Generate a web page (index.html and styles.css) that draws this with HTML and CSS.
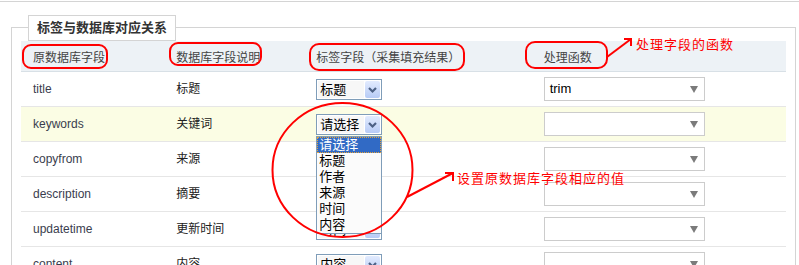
FILE: index.html
```html
<!DOCTYPE html>
<html lang="zh-CN">

<head>
    <meta charset="UTF-8">
    <title>标签与数据库对应关系</title>
    <link rel="stylesheet" href="styles.css">
</head>

<body>
    <div class="page">
        <div class="panel">
            <div class="legend">标签与数据库对应关系</div>
            <table class="map">
                <colgroup>
                    <col class="c1"><col class="c2"><col class="c3"><col class="c4">
                </colgroup>
                <thead>
                    <tr>
                        <th>原数据库字段</th>
                        <th>数据库字段说明</th>
                        <th>标签字段（采集填充结果）</th>
                        <th>处理函数</th>
                    </tr>
                </thead>
                <tbody>
                    <tr>
                        <td class="en">title</td>
                        <td>标题</td>
                        <td>
                            <div class="xp-select"><span class="val">标题</span><span class="btn"><svg width="15" height="17" viewBox="0 0 15 17"><path d="M4 7 L7.5 10.5 L11 7" fill="none" stroke="#4d6185" stroke-width="2.2"/></svg></span></div>
                        </td>
                        <td>
                            <div class="fn-select"><span class="val">trim</span><i class="tri"></i></div>
                        </td>
                    </tr>
                    <tr class="hover">
                        <td class="en">keywords</td>
                        <td>关键词</td>
                        <td>
                            <div class="xp-select"><span class="val">请选择</span><span class="btn"><svg width="15" height="17" viewBox="0 0 15 17"><path d="M4 7 L7.5 10.5 L11 7" fill="none" stroke="#4d6185" stroke-width="2.2"/></svg></span>
                                <ul class="droplist">
                                    <li class="on">请选择</li>
                                    <li>标题</li>
                                    <li>作者</li>
                                    <li>来源</li>
                                    <li>时间</li>
                                    <li>内容</li>
                                </ul>
                            </div>
                        </td>
                        <td>
                            <div class="fn-select"><span class="val"></span><i class="tri"></i></div>
                        </td>
                    </tr>
                    <tr>
                        <td class="en">copyfrom</td>
                        <td>来源</td>
                        <td>
                            <div class="xp-select"><span class="val"></span><span class="btn"><svg width="15" height="17" viewBox="0 0 15 17"><path d="M4 7 L7.5 10.5 L11 7" fill="none" stroke="#4d6185" stroke-width="2.2"/></svg></span></div>
                        </td>
                        <td>
                            <div class="fn-select"><span class="val"></span><i class="tri"></i></div>
                        </td>
                    </tr>
                    <tr>
                        <td class="en">description</td>
                        <td>摘要</td>
                        <td>
                            <div class="xp-select"><span class="val"></span><span class="btn"><svg width="15" height="17" viewBox="0 0 15 17"><path d="M4 7 L7.5 10.5 L11 7" fill="none" stroke="#4d6185" stroke-width="2.2"/></svg></span></div>
                        </td>
                        <td>
                            <div class="fn-select"><span class="val"></span><i class="tri"></i></div>
                        </td>
                    </tr>
                    <tr>
                        <td class="en">updatetime</td>
                        <td>更新时间</td>
                        <td>
                            <div class="xp-select"><span class="val">时间</span><span class="btn"><svg width="15" height="17" viewBox="0 0 15 17"><path d="M4 7 L7.5 10.5 L11 7" fill="none" stroke="#4d6185" stroke-width="2.2"/></svg></span></div>
                        </td>
                        <td>
                            <div class="fn-select"><span class="val"></span><i class="tri"></i></div>
                        </td>
                    </tr>
                    <tr>
                        <td class="en">content</td>
                        <td>内容</td>
                        <td>
                            <div class="xp-select"><span class="val">内容</span><span class="btn"><svg width="15" height="17" viewBox="0 0 15 17"><path d="M4 7 L7.5 10.5 L11 7" fill="none" stroke="#4d6185" stroke-width="2.2"/></svg></span></div>
                        </td>
                        <td>
                            <div class="fn-select"><span class="val"></span><i class="tri"></i></div>
                        </td>
                    </tr>
                </tbody>
            </table>
        </div>

        <!-- red hand-drawn notes over the screenshot -->
        <svg class="marks" width="799" height="265" viewBox="0 0 799 265">
            <g fill="none" stroke="#f00" stroke-width="2">
                <rect x="23" y="45" width="84" height="23" rx="8"/>
                <rect x="170" y="43" width="91" height="22" rx="8"/>
                <rect x="310" y="44" width="154" height="26" rx="9"/>
                <rect x="526" y="42" width="81" height="26" rx="9"/>
                <ellipse cx="342.5" cy="170" rx="70" ry="67"/>
                <path d="M607 57 L631 39"/>
                <path d="M624 39 L631 39 L631 46"/>
                <path d="M407 197 L453 173"/>
                <path d="M445 173 L453 173 L453 181"/>
            </g>
        </svg>
        <span class="note note-fn">处理字段的函数</span>
        <span class="note note-val">设置原数据库字段相应的值</span>
    </div>
</body>

</html>
```

FILE: styles.css
```css
* {
    margin: 0;
    padding: 0;
}

ul,ol,li {
    list-style: none;
}

body {
    font-family: "Liberation Sans", "Noto Sans CJK SC", sans-serif;
    font-size: 12px;
    color: #333;
    background: #fff;
}

.page {
    position: relative;
    width: 799px;
    height: 265px;
    overflow: hidden;
    margin-top: 1px;
    border-top: 1px solid #d4d4d4;
}

.panel {
    margin: 25px 3px 0 11px;
    border: 1px solid #d4d4d4;
    border-bottom: none;
    padding: 0 9px;
    height: 400px;
}

.legend {
    width: fit-content;
    height: 24px;
    margin: -13px 0 0 7px;
    padding: 0 8px;
    border: 1px solid #d4d4d4;
    background: #fff;
    font-size: 13px;
    font-weight: bold;
    line-height: 24px;
    color: #333;
}

.map {
    width: 100%;
    table-layout: fixed;
    border-collapse: separate;
    border-spacing: 0;
}

.map .c1 { width: 143px; }
.map .c2 { width: 140px; }
.map .c3 { width: 227px; }
.map .c4 { width: 254px; }

.map th {
    height: 30px;
    padding-left: 12px;
    text-align: left;
    font-weight: normal;
    color: #444;
    background: #edf2f6;
    border-bottom: 1px solid #d8e0e6;
}

.map td {
    height: 34px;
    padding-left: 12px;
    line-height: 16px;
    vertical-align: middle;
    border-bottom: 1px solid #e6e6e6;
    color: #222;
}

.map td.en {
    color: #3a3d4e;
}

.map tr.hover td {
    background: #fbfde4;
}

/* old xp style select */
.xp-select {
    position: relative;
    display: flex;
    width: 66px;
    height: 21px;
    box-sizing: border-box;
    border: 1px solid #7f9db9;
    background: #fff;
}

.xp-select .val {
    flex: 1;
    margin: 1px 0 1px 1px;
    padding-left: 2px;
    background: #f7f7f7;
    font-size: 13px;
    line-height: 17px;
    color: #000;
    white-space: nowrap;
    overflow: hidden;
}

.xp-select .btn {
    width: 15px;
    height: 17px;
    margin: 1px;
    border-radius: 2px;
    background: linear-gradient(#e2ebfe, #b7cbf6);
}

.xp-select .btn svg {
    display: block;
}

.droplist {
    position: absolute;
    left: -1px;
    top: 21px;
    width: 64px;
    border: 1px solid #7f9db9;
    background: #fbfbfb;
    z-index: 2;
}

.droplist li {
    height: 16px;
    padding-left: 2px;
    font-size: 13px;
    line-height: 16px;
    color: #000;
}

.droplist li.on {
    background: #316ac5;
    color: #fff;
    outline: 1px dotted #e3a23b;
    outline-offset: -1px;
}

.fn-select {
    display: flex;
    justify-content: space-between;
    align-items: center;
    width: 161px;
    height: 24px;
    box-sizing: border-box;
    padding: 0 6px 0 5px;
    border: 1px solid #ccc;
    background: #fff;
}

.fn-select .val {
    font-size: 13px;
    color: #000;
}

.fn-select .tri {
    width: 0;
    height: 0;
    border-left: 4px solid transparent;
    border-right: 4px solid transparent;
    border-top: 7px solid #7b7b7b;
}

.marks {
    position: absolute;
    left: 0;
    top: -2px;
    pointer-events: none;
    z-index: 3;
}

.note {
    position: absolute;
    font-family: "Noto Sans CJK SC", sans-serif;
    font-size: 13px;
    line-height: 14px;
    letter-spacing: 1px;
    color: #f00;
    z-index: 3;
}

.note-fn {
    left: 636px;
    top: 35px;
}

.note-val {
    left: 457px;
    top: 169px;
}
```
